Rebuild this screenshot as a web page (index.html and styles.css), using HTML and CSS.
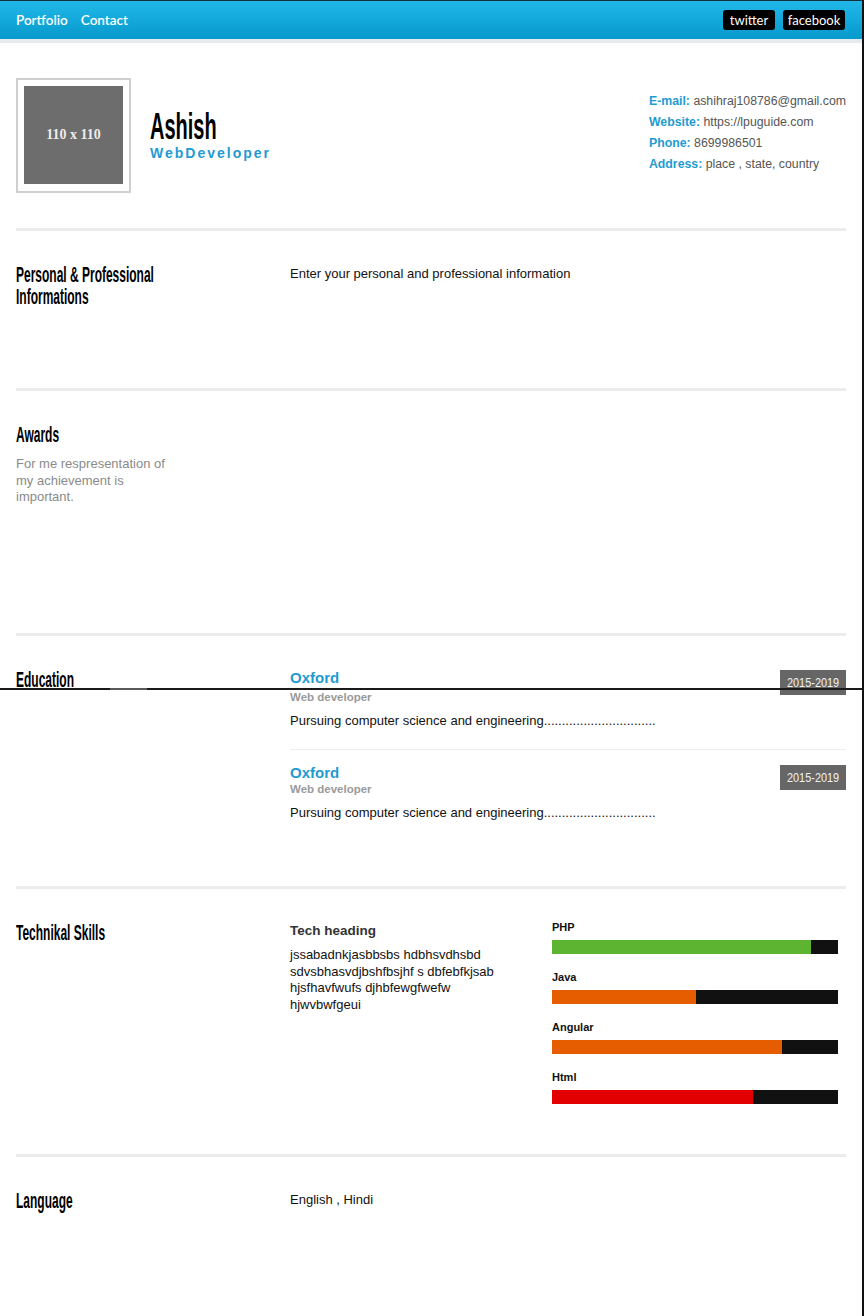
FILE: index.html
```html
<!DOCTYPE html>
<html lang="en">
<head>
<meta charset="utf-8">
<title>Ashish - Resume</title>
<link rel="stylesheet" href="styles.css">
</head>
<body>
<div class="page">
  <nav class="topbar">
    <div class="nav-links">
      <a href="#" class="nav-link">Portfolio</a>
      <a href="#" class="nav-link">Contact</a>
    </div>
    <div class="social">
      <a href="#" class="social-btn btn-twitter">twitter</a>
      <a href="#" class="social-btn btn-facebook">facebook</a>
    </div>
  </nav>

  <main class="container">
    <header class="profile">
      <div class="photo"><div class="photo-img">110 x 110</div></div>
      <div class="name-block">
        <h1 class="name">Ashish</h1>
        <div class="job">WebDeveloper</div>
      </div>
      <ul class="contact">
        <li><b>E-mail:</b> ashihraj108786@gmail.com</li>
        <li><b>Website:</b> https://lpuguide.com</li>
        <li><b>Phone:</b> 8699986501</li>
        <li><b>Address:</b> place , state, country</li>
      </ul>
    </header>

    <section class="section section-personal">
      <div class="sec-side"><h2 class="sec-title">Personal &amp; Professional Informations</h2></div>
      <div class="sec-body"><p class="lead">Enter your personal and professional information</p></div>
    </section>

    <section class="section section-awards">
      <div class="sec-side">
        <h2 class="sec-title">Awards</h2>
        <p class="sec-note">For me respresentation of my achievement is important.</p>
      </div>
      <div class="sec-body"></div>
    </section>

    <section class="section section-edu">
      <div class="sec-side"><h2 class="sec-title">Education</h2></div>
      <div class="sec-body">
        <div class="edu-entry">
          <div class="edu-info">
            <div class="edu-school">Oxford</div>
            <div class="edu-role">Web developer</div>
            <p class="edu-desc">Pursuing computer science and engineering...............................</p>
          </div>
          <span class="badge"><span class="badge-text">2015-2019</span></span>
        </div>
        <div class="edu-entry">
          <div class="edu-info">
            <div class="edu-school">Oxford</div>
            <div class="edu-role">Web developer</div>
            <p class="edu-desc">Pursuing computer science and engineering...............................</p>
          </div>
          <span class="badge"><span class="badge-text">2015-2019</span></span>
        </div>
      </div>
    </section>

    <section class="section section-tech">
      <div class="sec-side"><h2 class="sec-title">Technikal Skills</h2></div>
      <div class="sec-body tech">
        <div class="tech-about">
          <h3 class="tech-heading">Tech heading</h3>
          <p class="tech-text">jssabadnkjasbbsbs hdbhsvdhsbd sdvsbhasvdjbshfbsjhf s dbfebfkjsab hjsfhavfwufs djhbfewgfwefw hjwvbwfgeui</p>
        </div>
        <div class="skills">
          <div class="skill">
            <div class="skill-label">PHP</div>
            <div class="skill-bar"><div class="skill-fill fill-green" style="width: 90.5%"></div></div>
          </div>
          <div class="skill">
            <div class="skill-label">Java</div>
            <div class="skill-bar"><div class="skill-fill fill-orange" style="width: 50.3%"></div></div>
          </div>
          <div class="skill">
            <div class="skill-label">Angular</div>
            <div class="skill-bar"><div class="skill-fill fill-orange" style="width: 80.3%"></div></div>
          </div>
          <div class="skill">
            <div class="skill-label">Html</div>
            <div class="skill-bar"><div class="skill-fill fill-red" style="width: 70.2%"></div></div>
          </div>
        </div>
      </div>
    </section>

    <section class="section section-lang">
      <div class="sec-side"><h2 class="sec-title">Language</h2></div>
      <div class="sec-body"><p class="lead">English , Hindi</p></div>
    </section>
  </main>

  <div class="stitch"></div>
</div>
</body>
</html>
```

FILE: styles.css
```css
* { box-sizing: border-box; }

html, body {
  margin: 0;
  padding: 0;
  background: #fff;
}

body {
  font-family: "Liberation Sans", Arial, sans-serif;
  color: #111;
}

.page {
  position: relative;
  width: 864px;
  min-height: 1316px;
  border-right: 2px solid #111;
}

/* ---------- top bar ---------- */
.topbar {
  display: flex;
  justify-content: space-between;
  align-items: center;
  height: 43px;
  padding: 0 17px 0 16px;
  border-top: 1px solid #17303d;
  border-bottom: 4px solid #e6ecee;
  background: linear-gradient(#21b8e8, #0699cc);
}

.nav-links {
  display: flex;
  gap: 13px;
}

.nav-link {
  color: #fff;
  text-decoration: none;
  font-family: Lato, "Open Sans", sans-serif;
  font-size: 13.5px;
  font-weight: 600;
}

.social {
  display: flex;
  gap: 8px;
}

.social-btn {
  display: block;
  height: 20px;
  line-height: 20px;
  border-radius: 3px;
  background: #000;
  color: #fff;
  text-align: center;
  text-decoration: none;
  font-family: Lato, "Open Sans", sans-serif;
  font-size: 13px;
}

.btn-twitter { width: 52px; }
.btn-facebook { width: 62px; }

/* ---------- container ---------- */
.container {
  padding: 0 16px;
}

/* ---------- profile header ---------- */
.profile {
  display: flex;
  align-items: flex-start;
  padding: 35px 0;
}

.photo {
  width: 115px;
  height: 115px;
  padding: 6px;
  border: 2px solid #cfcfcf;
  background: #fff;
}

.photo-img {
  width: 99px;
  height: 98px;
  display: flex;
  align-items: center;
  justify-content: center;
  background: #6d6d6d;
  color: #ececec;
  font-family: "Liberation Serif", "Times New Roman", serif;
  font-size: 14px;
  font-weight: bold;
}

.name-block {
  margin-left: 19px;
  padding-top: 30px;
}

.name {
  margin: 0;
  color: #000;
  font-family: "Liberation Sans", Arial, sans-serif;
  font-size: 37px;
  line-height: 37px;
  font-weight: bold;
  transform: scaleX(0.54);
  transform-origin: left top;
}

.job {
  color: #1f9bd1;
  font-size: 14px;
  line-height: 16px;
  font-weight: bold;
  letter-spacing: 2px;
}

.contact {
  margin: 13px 0 0 auto;
  padding: 0;
  list-style: none;
  font-size: 12.3px;
  line-height: 21px;
  color: #555;
  white-space: nowrap;
}

.contact b {
  color: #1f9bd1;
}

/* ---------- sections ---------- */
.section {
  display: grid;
  grid-template-columns: 274px 1fr;
  align-items: start;
  padding-top: 33px;
  border-top: 3px solid #ececec;
}

.section-personal { min-height: 160px; }
.section-awards { min-height: 245px; }
.section-edu { min-height: 253px; }
.section-tech { min-height: 268px; }

.sec-title {
  width: 300px;
  margin: 0;
  color: #000;
  font-family: "Liberation Sans", Arial, sans-serif;
  font-size: 22px;
  line-height: 22px;
  font-weight: bold;
  transform: scaleX(0.545);
  transform-origin: left top;
}

.sec-note {
  max-width: 160px;
  margin: 10px 0 0;
  color: #8a8a8a;
  font-size: 13px;
  line-height: 16.5px;
}

.lead {
  margin: 1px 0 0;
  font-size: 13px;
  line-height: 17px;
  color: #111;
}

/* ---------- education ---------- */
.edu-entry {
  display: flex;
  justify-content: space-between;
  align-items: flex-start;
  padding-bottom: 20px;
  border-bottom: 1px solid #eeeeee;
}

.edu-entry + .edu-entry {
  padding-top: 14px;
  border-bottom: 0;
}

.edu-school {
  color: #1f9bd1;
  font-size: 15px;
  line-height: 18px;
  font-weight: bold;
}

.edu-role {
  color: #9a9a9a;
  font-size: 11.5px;
  line-height: 14px;
  font-weight: bold;
}

.edu-entry:first-child .edu-role {
  margin-top: 3px;
}

.edu-desc {
  margin: 8px 0 0;
  font-size: 13px;
  line-height: 17px;
  color: #111;
}

.badge {
  display: flex;
  align-items: center;
  justify-content: center;
  width: 66px;
  height: 25px;
  margin-top: 1px;
  background: #666;
}

.badge-text {
  display: inline-block;
  color: #f2f2f2;
  font-size: 13px;
  line-height: 25px;
  transform: scaleX(0.84);
}

/* ---------- skills ---------- */
.tech {
  display: grid;
  grid-template-columns: 262px 286px;
}

.tech-heading {
  margin: 0;
  color: #333;
  font-size: 13.5px;
  line-height: 17px;
  font-weight: bold;
}

.tech-text {
  max-width: 215px;
  margin: 8px 0 0;
  font-size: 13px;
  line-height: 16.5px;
  color: #111;
}

.skill-label {
  margin-bottom: 8px;
  font-size: 11px;
  line-height: 10px;
  font-weight: bold;
  color: #111;
}

.skill-bar {
  height: 14px;
  margin-bottom: 18px;
  background: #111;
}

.skill-fill {
  height: 100%;
}

.fill-green { background: #5cb431; }
.fill-orange { background: #e65d00; }
.fill-red { background: #e30000; }

/* ---------- screenshot seam overlay ---------- */
.stitch {
  position: absolute;
  left: 0;
  top: 688px;
  width: 862px;
  height: 2px;
  background: linear-gradient(to right, #1a1a1a 110px, #5a5a5a 110px, #5a5a5a 147px, #1a1a1a 147px);
}
```
